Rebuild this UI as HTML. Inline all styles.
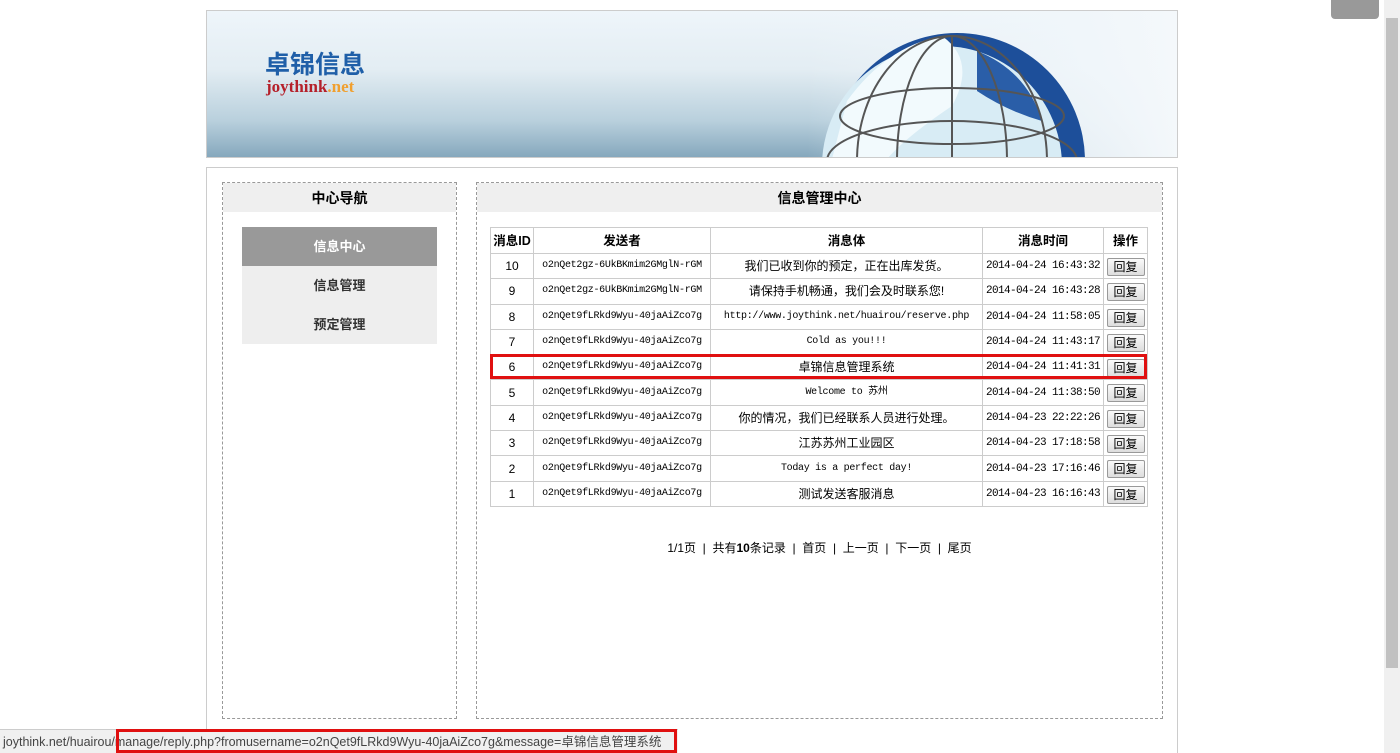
<!DOCTYPE html>
<html><head><meta charset="utf-8"><style>
*{margin:0;padding:0;box-sizing:border-box}
body{width:1400px;height:753px;overflow:hidden;background:#fff;font-family:"Liberation Sans","Noto Sans CJK SC",sans-serif;font-size:12px;color:#000;position:relative}
.abs{position:absolute}
#hdr{left:206px;top:10px;width:972px;height:148px;border:1px solid #ccc;overflow:hidden;background:linear-gradient(180deg,#eef5fa 0%,#e3edf3 40%,#b9d0dd 75%,#86a8bd 100%)}
#main{left:206px;top:167px;width:972px;height:586px;border:1px solid #ccc;border-bottom:none}
.panel{border:1px dashed #999}
.ptitle{height:29px;background:#efefef;text-align:center;font-weight:bold;font-size:14px;line-height:30px}
.menu div{height:39px;line-height:39px;text-align:center;font-weight:bold;font-size:13px;background:#eee;color:#333}
.menu div.on{background:#999;color:#fff}
table{border-collapse:collapse;position:absolute;left:490px;top:227px;width:657px;table-layout:fixed}
td,th{border:1px solid #ccc;height:25.3px;text-align:center;vertical-align:middle;font-size:12px;padding:0;white-space:nowrap;overflow:hidden;line-height:24px}
th{font-weight:bold;font-size:12.5px;height:26px}
td.m{font-family:"Liberation Mono","Noto Sans CJK SC",monospace;font-size:10px;letter-spacing:-0.3px}
td.t{font-family:"Liberation Mono",monospace;font-size:11px;letter-spacing:-0.6px}
.btn{display:inline-block;vertical-align:middle;width:38px;height:18px;border:1px solid #999;background:linear-gradient(#fafafa,#ddd);font-size:12px;line-height:16px;border-radius:2px}
</style></head><body>
<div id="hdr" class="abs">
<div class="abs" style="left:58px;top:34px;font-size:25px;font-weight:bold;color:#1f5fa8">卓锦信息</div>
<div class="abs" style="left:59px;top:66px;font-family:'Liberation Serif',serif;font-size:17px;font-weight:bold;color:#b5202a">joythink<span style="color:#f0a030">.net</span></div>
<div class="abs" style="left:600px;top:0;width:372px;height:148px;background:linear-gradient(90deg,rgba(240,246,250,0),rgba(240,246,250,0.9) 70%,#f4f8fb)"></div>
<svg class="abs" style="left:0;top:0" width="972" height="148">
<circle cx="750" cy="150" r="128" fill="#1d4f9a"/>
<circle cx="735" cy="155" r="120" fill="#d8ecf5"/>
<path d="M640 90 Q680 35 735 25 Q770 50 745 95 Q700 125 680 148 L625 148 Z" fill="#f2fafd"/>
<path d="M770 40 Q820 60 835 110 Q800 100 770 80 Z" fill="#2a5ea8"/>
<g fill="none" stroke="#555" stroke-width="2">
<ellipse cx="745" cy="150" rx="125" ry="40"/>
<ellipse cx="745" cy="105" rx="112" ry="28"/>
<ellipse cx="745" cy="150" rx="55" ry="125"/>
<ellipse cx="745" cy="150" rx="95" ry="125"/>
<line x1="745" y1="25" x2="745" y2="148"/>
</g>
</svg>
</div>
<div id="main" class="abs"></div>
<div class="abs panel" style="left:222px;top:182px;width:235px;height:537px">
<div class="ptitle">中心导航</div>
<div class="menu abs" style="left:19px;top:44px;width:195px"><div class="on">信息中心</div><div>信息管理</div><div>预定管理</div></div>
</div>
<div class="abs panel" style="left:476px;top:182px;width:687px;height:537px">
<div class="ptitle">信息管理中心</div>
</div>
<table>
<colgroup><col style="width:43px"><col style="width:177px"><col style="width:272px"><col style="width:121px"><col style="width:44px"></colgroup>
<tr><th>消息ID</th><th>发送者</th><th>消息体</th><th>消息时间</th><th>操作</th></tr>
<tr><td>10</td><td class="m">o2nQet2gz-6UkBKmim2GMglN-rGM</td><td>我们已收到你的预定，正在出库发货。</td><td class="t">2014-04-24 16:43:32</td><td><span class="btn">回复</span></td></tr>
<tr><td>9</td><td class="m">o2nQet2gz-6UkBKmim2GMglN-rGM</td><td>请保持手机畅通，我们会及时联系您!</td><td class="t">2014-04-24 16:43:28</td><td><span class="btn">回复</span></td></tr>
<tr><td>8</td><td class="m">o2nQet9fLRkd9Wyu-40jaAiZco7g</td><td class="m">http://www.joythink.net/huairou/reserve.php</td><td class="t">2014-04-24 11:58:05</td><td><span class="btn">回复</span></td></tr>
<tr><td>7</td><td class="m">o2nQet9fLRkd9Wyu-40jaAiZco7g</td><td class="m">Cold as you!!!</td><td class="t">2014-04-24 11:43:17</td><td><span class="btn">回复</span></td></tr>
<tr><td>6</td><td class="m">o2nQet9fLRkd9Wyu-40jaAiZco7g</td><td>卓锦信息管理系统</td><td class="t">2014-04-24 11:41:31</td><td><span class="btn">回复</span></td></tr>
<tr><td>5</td><td class="m">o2nQet9fLRkd9Wyu-40jaAiZco7g</td><td class="m">Welcome to 苏州</td><td class="t">2014-04-24 11:38:50</td><td><span class="btn">回复</span></td></tr>
<tr><td>4</td><td class="m">o2nQet9fLRkd9Wyu-40jaAiZco7g</td><td>你的情况，我们已经联系人员进行处理。</td><td class="t">2014-04-23 22:22:26</td><td><span class="btn">回复</span></td></tr>
<tr><td>3</td><td class="m">o2nQet9fLRkd9Wyu-40jaAiZco7g</td><td>江苏苏州工业园区</td><td class="t">2014-04-23 17:18:58</td><td><span class="btn">回复</span></td></tr>
<tr><td>2</td><td class="m">o2nQet9fLRkd9Wyu-40jaAiZco7g</td><td class="m">Today is a perfect day!</td><td class="t">2014-04-23 17:16:46</td><td><span class="btn">回复</span></td></tr>
<tr><td>1</td><td class="m">o2nQet9fLRkd9Wyu-40jaAiZco7g</td><td>测试发送客服消息</td><td class="t">2014-04-23 16:16:43</td><td><span class="btn">回复</span></td></tr>
</table>
<div class="abs" style="left:490px;top:354px;width:657px;height:25px;border:3px solid #e01010"></div>
<div class="abs" style="left:476px;top:539px;width:687px;text-align:center;font-size:12px">1/1页 &nbsp;|&nbsp; 共有<b>10</b>条记录 &nbsp;|&nbsp; 首页 &nbsp;|&nbsp; 上一页 &nbsp;|&nbsp; 下一页 &nbsp;|&nbsp; 尾页</div>
<div class="abs" style="left:0;top:729px;width:678px;height:24px;background:#f0f0f0;border-top:1px solid #ccc;color:#444;font-size:12.5px;line-height:24px;padding-left:3px;white-space:nowrap;overflow:hidden">joythink.net/huairou/manage/reply.php?fromusername=o2nQet9fLRkd9Wyu-40jaAiZco7g&amp;message=卓锦信息管理系统</div>
<div class="abs" style="left:116px;top:729px;width:561px;height:24px;border:3px solid #e01010"></div>
<div class="abs" style="left:1331px;top:0;width:48px;height:19px;background:#999;border-radius:0 0 4px 4px"></div>
<div class="abs" style="left:1384px;top:0;width:16px;height:753px;background:#f0f0f0"></div>
<div class="abs" style="left:1386px;top:18px;width:12px;height:650px;background:#c1c1c1"></div>
</body></html>
